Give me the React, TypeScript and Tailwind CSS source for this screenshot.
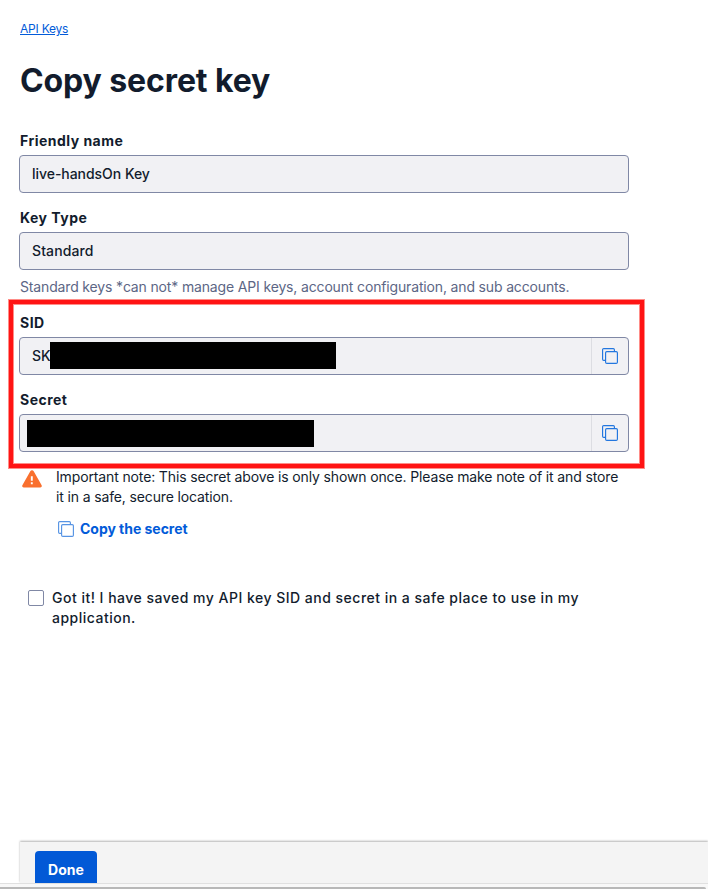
import type { ReactNode } from "react";

function CopyIcon({ className = "" }: { className?: string }) {
  return (
    <svg width="16" height="16" viewBox="0 0 16 16" fill="none" stroke="currentColor" strokeWidth="1.15" className={className}>
      <rect x="3.6" y="3.6" width="11.8" height="11.8" rx="1.2" />
      <path d="M3.6 12.4h-1.9a1.1 1.1 0 0 1-1.1-1.1v-9.6a1.1 1.1 0 0 1 1.1-1.1h9.6a1.1 1.1 0 0 1 1.1 1.1v1.9" />
    </svg>
  );
}

function WarningIcon() {
  return (
    <svg width="20" height="18" viewBox="0 0 20 18">
      <path d="M8.3 1.2a2 2 0 0 1 3.4 0l7.8 13.8a1.6 1.6 0 0 1-1.4 2.5H1.9A1.6 1.6 0 0 1 .5 15z" fill="#f9702e" />
      <path d="M9.8 6.2v4.6M9.8 12.3v2" stroke="#fff" strokeWidth="1.9" fill="none" />
    </svg>
  );
}

function Label({ children }: { children: ReactNode }) {
  return <div className="ml-px h-5 text-sm leading-5 font-bold tracking-[0.48px]">{children}</div>;
}

function Field({ children, copy = false }: { children?: ReactNode; copy?: boolean }) {
  return (
    <div className="mt-1 flex h-[38px] w-[610px] overflow-hidden rounded-[4px] border border-[#8088a5] bg-[#f1f1f4]">
      <div className="flex flex-1 items-center pl-3 text-sm font-medium">{children}</div>
      {copy && (
        <button className="flex w-[37px] items-center justify-center border-l border-[#dcdde2] text-[#2377df]">
          <CopyIcon />
        </button>
      )}
    </div>
  );
}

export default function App() {
  return (
    <div className="relative flex h-[889px] w-[708px] flex-col overflow-hidden bg-white font-['Inter',sans-serif] text-[#121c2d]">
      <main className="flex flex-1 flex-col pt-[19px] pl-[19px]">
        <a className="ml-px h-5 self-start text-xs leading-5 tracking-[-0.22px] text-[#025bd9] underline">API Keys</a>
        <h1 className="mt-[20px] ml-px h-[44px] text-[32px] leading-[44px] font-bold tracking-[-0.1px]">Copy secret key</h1>
        <div className="mt-[28px]">
          <Label>Friendly name</Label>
          <Field>
            <span className="tracking-[-0.04px]">live-handsOn Key</span>
          </Field>
        </div>
        <div className="mt-[15px]">
          <Label>Key Type</Label>
          <Field>
            <span className="tracking-[0.1px]">Standard</span>
          </Field>
          <p className="mt-[7px] ml-px text-sm leading-5 tracking-[-0.155px] text-[#5c6685]">
            Standard keys *can not* manage API keys, account configuration, and sub accounts.
          </p>
        </div>
        <div className="relative mt-4">
          <div className="absolute top-[-14px] left-[-11px] h-[170px] w-[637px] border-6 border-[#ff8d88]">
            <div className="absolute -inset-[5px] border-4 border-[#ff1414]" />
          </div>
          <Label>SID</Label>
          <Field copy>
            SK
            <span className="-ml-px mb-[2px] h-[27px] w-[286px] bg-black" />
          </Field>
          <div className="mt-[15px]">
            <Label>Secret</Label>
            <Field copy>
              <span className="-ml-[5px] h-[27px] w-[287px] bg-black" />
            </Field>
          </div>
        </div>
        <div className="mt-[15px] flex">
          <div className="mt-[3px] ml-[3px] w-[34px]">
            <WarningIcon />
          </div>
          <div>
            <p className="text-sm leading-5 tracking-[-0.135px]">
              Important note: This secret above is only shown once. Please make note of it and store
              <br />
              it in a safe, secure location.
            </p>
            <button className="mt-3 ml-[2px] flex h-5 items-center gap-[6px] text-sm font-bold tracking-[-0.03px] text-[#025bd9]">
              <CopyIcon className="text-[#5794e4]" />
              Copy the secret
            </button>
          </div>
        </div>
        <label className="mt-[49px] ml-[9px] flex">
          <span className="mt-[2px] mr-2 h-4 w-4 rounded-[2px] border border-[#8088a5] bg-white" />
          <span className="text-sm leading-5 font-medium tracking-[0.49px]">
            Got it! I have saved my API key SID and secret in a safe place to use in my
            <br />
            application.
          </span>
        </label>
      </main>
      <footer className="ml-[20px] h-[41px] bg-[#f4f4f4] pt-[9px] pl-[15px] shadow-[0_-1px_2px_rgba(0,0,0,0.3)]">
        <button className="flex h-8 w-[62px] items-center justify-center rounded-t-[4px] bg-[#0259d6] pt-[6px] text-sm font-bold text-white">
          Done
        </button>
      </footer>
      <div className="relative h-[6px] border-t border-[#e0e0e0] bg-[#f8f8f8] pt-[3px]">
        <div className="h-[2px] w-[706px] rounded-tr-sm bg-[#b8b8b8]" />
      </div>
    </div>
  );
}
